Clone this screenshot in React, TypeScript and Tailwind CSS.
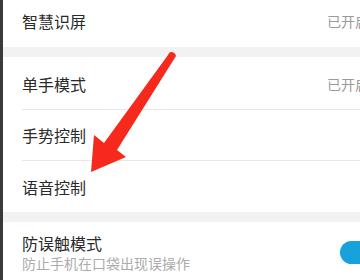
const font = { fontFamily: '"Noto Sans CJK SC", "Noto Sans", sans-serif' };

function Row({ label, value, border }: { label: string; value?: string; border?: boolean }) {
  return (
    <div className="pl-[19px]">
      <div className={`flex h-[51px] items-center ${border ? "border-b border-[#e8e8e8]" : ""}`}>
        <span className="text-[16px] leading-5 text-[#2a2a2a]">{label}</span>
        {value && (
          <span className="ml-auto w-[33px] shrink-0 whitespace-nowrap text-[14px] text-[#9a9a9a]">
            {value}
          </span>
        )}
      </div>
    </div>
  );
}

export default function App() {
  return (
    <div className="relative flex h-[280px] w-[360px] overflow-hidden bg-white" style={font}>
      <div className="w-[3px] shrink-0 bg-[#3a3a3a]" />
      <div className="flex min-w-0 flex-1 flex-col overflow-hidden">
        <div className="flex h-[47px] items-center pb-[5px] pl-[19px]">
          <span className="text-[16px] leading-5 text-[#2a2a2a]">智慧识屏</span>
          <span className="ml-auto w-[33px] shrink-0 whitespace-nowrap text-[14px] text-[#9a9a9a]">已开启</span>
        </div>
        <div className="h-[10px] bg-[#f2f2f2]" />
        <div className="pt-[2px]">
          <Row label="单手模式" value="已开启" border />
        </div>
        <Row label="手势控制" border />
        <Row label="语音控制" />
        <div className="h-[10px] bg-[#f2f2f2]" />
        <div className="flex items-center pl-[19px] pt-[11px]">
          <div className="flex flex-col">
            <span className="text-[16px] leading-5 text-[#2a2a2a]">防误触模式</span>
            <span className="mt-[1px] text-[14px] leading-[18px] text-[#ababab]">防止手机在口袋出现误操作</span>
          </div>
          <div className="ml-auto w-[20px] shrink-0">
            <div className="h-[23px] w-[44px] rounded-full bg-[#17a2dc]" />
          </div>
        </div>
      </div>
      <svg className="pointer-events-none absolute left-0 top-0" width="360" height="280" viewBox="0 0 360 280">
        <path
          d="M171 52 Q175 52 176 56 L117 150 L126 157 L91 172 L94 135 L104 143 L168 55 Q169 52 171 52 Z"
          fill="#f52a1c"
        />
      </svg>
    </div>
  );
}
